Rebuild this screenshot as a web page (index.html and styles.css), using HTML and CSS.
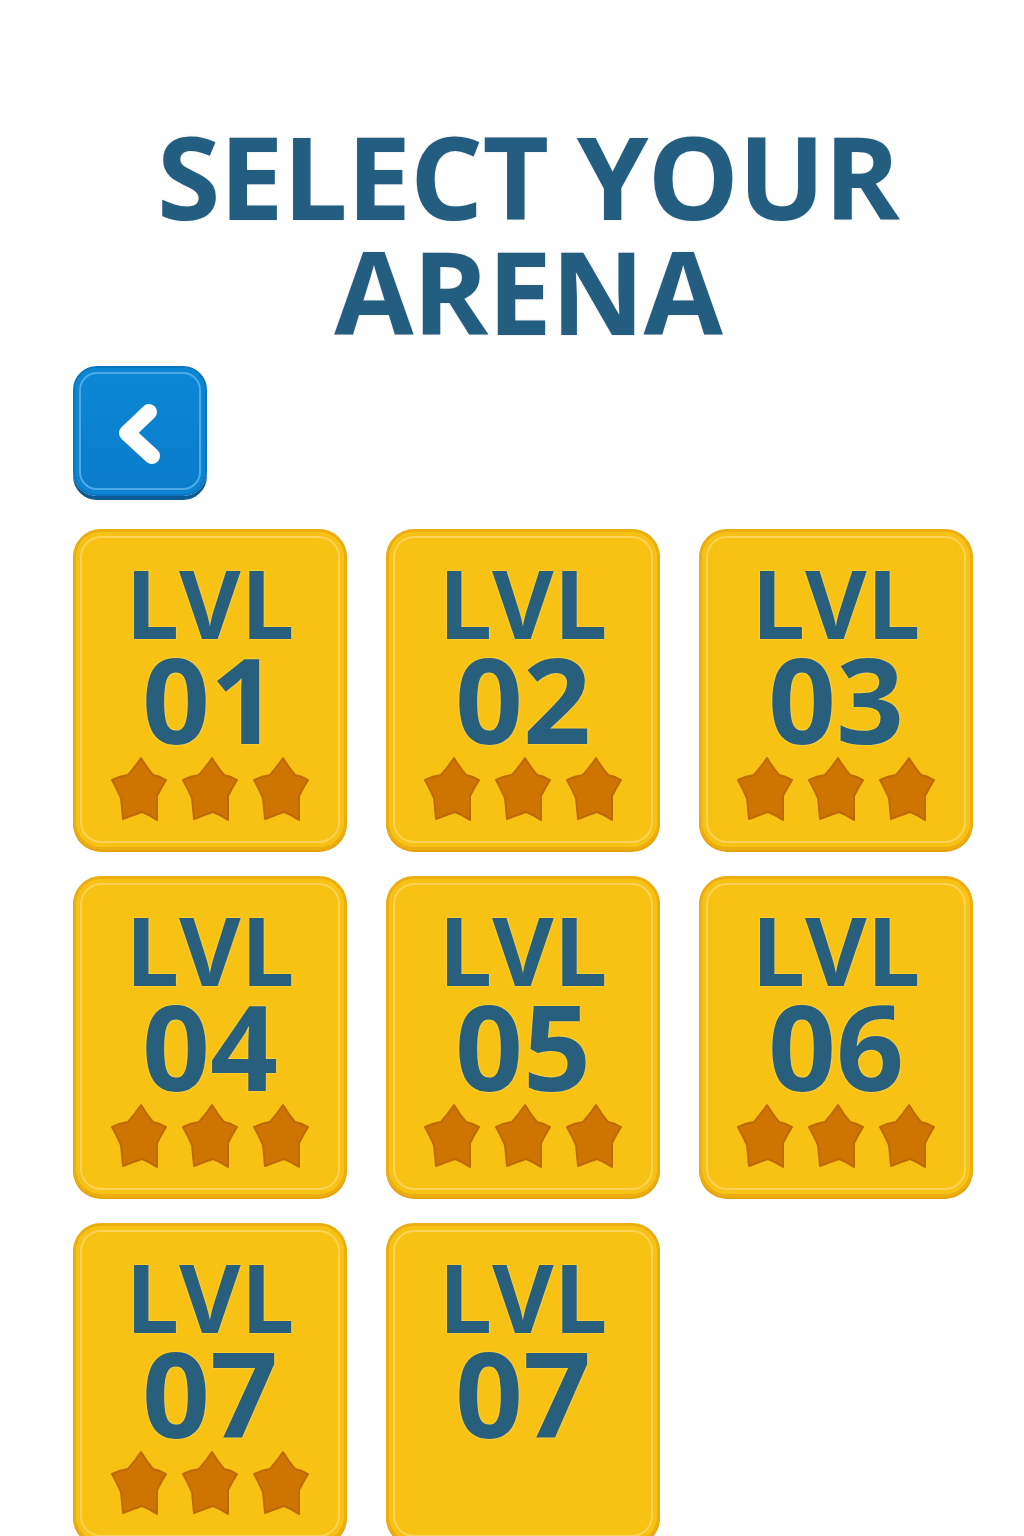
FILE: index.html
```html
<!DOCTYPE html>
<html>
<head>
<meta charset="utf-8">
<link rel="stylesheet" href="styles.css">
</head>
<body>
<div class="page">
  <h1 class="title">SELECT YOUR<br>ARENA</h1>
  <button class="back" aria-label="Back">
    <svg width="134" height="130" viewBox="0 0 134 130"><path d="M76 46 L54 67 L79 90" fill="none" stroke="#fff" stroke-width="16" stroke-linecap="round" stroke-linejoin="round"/></svg>
  </button>
  <div class="grid">
    <div class="card"><div class="lvl">LVL</div><div class="num">01</div><div class="stars"><svg class="star"><use href="#star"/></svg><svg class="star"><use href="#star"/></svg><svg class="star"><use href="#star"/></svg></div></div>
    <div class="card"><div class="lvl">LVL</div><div class="num">02</div><div class="stars"><svg class="star"><use href="#star"/></svg><svg class="star"><use href="#star"/></svg><svg class="star"><use href="#star"/></svg></div></div>
    <div class="card"><div class="lvl">LVL</div><div class="num">03</div><div class="stars"><svg class="star"><use href="#star"/></svg><svg class="star"><use href="#star"/></svg><svg class="star"><use href="#star"/></svg></div></div>
    <div class="card"><div class="lvl">LVL</div><div class="num">04</div><div class="stars"><svg class="star"><use href="#star"/></svg><svg class="star"><use href="#star"/></svg><svg class="star"><use href="#star"/></svg></div></div>
    <div class="card"><div class="lvl">LVL</div><div class="num">05</div><div class="stars"><svg class="star"><use href="#star"/></svg><svg class="star"><use href="#star"/></svg><svg class="star"><use href="#star"/></svg></div></div>
    <div class="card"><div class="lvl">LVL</div><div class="num">06</div><div class="stars"><svg class="star"><use href="#star"/></svg><svg class="star"><use href="#star"/></svg><svg class="star"><use href="#star"/></svg></div></div>
    <div class="card"><div class="lvl">LVL</div><div class="num">07</div><div class="stars"><svg class="star"><use href="#star"/></svg><svg class="star"><use href="#star"/></svg><svg class="star"><use href="#star"/></svg></div></div>
    <div class="card"><div class="lvl">LVL</div><div class="num">07</div></div>
  </div>
</div>
<svg width="0" height="0" class="defs">
  <defs>
    <symbol id="star" viewBox="0 0 56 66">
      <path d="M30 2 Q36 12 42 19 Q48 20 55 24 Q50 32 46 40 Q46 52 46 64 Q39 59 31 56 Q22 59 12 63 Q11 52 10 42 Q6 33 1 24 Q9 20 17 19 Q24 11 30 2 Z" fill="#cd7500" stroke="#bd6906" stroke-width="2" stroke-linejoin="round"/>
    </symbol>
  </defs>
</svg>
</body>
</html>
```
FILE: styles.css
```css
* { box-sizing: border-box; }
html, body { margin: 0; padding: 0; background: #fff; }
body { font-family: "Open Sans", "Noto Sans", sans-serif; }
.page {
  width: 900px;
  margin-left: 73px;
  padding-top: 118px;
  height: 1536px;
  overflow: hidden;
}
.title {
  margin: 0;
  padding-left: 10px;
  text-align: center;
  font-size: 115px;
  line-height: 115px;
  font-weight: 700;
  color: #235e80;
  letter-spacing: -1px;
  text-shadow: 0 0 2px rgba(0,0,0,0.15);
}
.back {
  display: block;
  margin: 18px 0 0 0;
  padding: 0;
  width: 134px;
  height: 130px;
  border: 2px solid #0a74bf;
  border-radius: 24px;
  background: linear-gradient(#0b88d6, #0a7cc8);
  box-shadow: 0 4px 0 #0b5a94, inset 0 0 0 4px #0b84d2, inset 0 0 0 6px #4daae6;
  cursor: pointer;
}
.back svg { display: block; margin: -2px 0 0 -2px; }
.grid {
  margin-top: 33px;
  display: grid;
  grid-template-columns: repeat(3, 274px);
  column-gap: 39px;
  row-gap: 26px;
  grid-auto-rows: 321px;
}
.card {
  background: #f8c214;
  border: 3px solid #ebad0f;
  border-radius: 28px;
  box-shadow: 0 2px 0 #e4a20c, inset 0 0 0 4px #f8c214, inset 0 0 0 6px #fcd259;
  padding-top: 30px;
  display: flex;
  flex-direction: column;
  align-items: center;
  color: #275f7d;
  font-weight: 700;
  text-shadow: 0 0 2px #ffe680;
}
.lvl {
  font-size: 95px;
  line-height: 80px;
}
.num {
  margin-top: 11px;
  font-size: 119px;
  line-height: 90px;
}
.stars {
  margin-top: 13px;
  display: flex;
  gap: 15px;
}
.star { width: 56px; height: 66px; display: block; }
.defs { position: absolute; }
```
